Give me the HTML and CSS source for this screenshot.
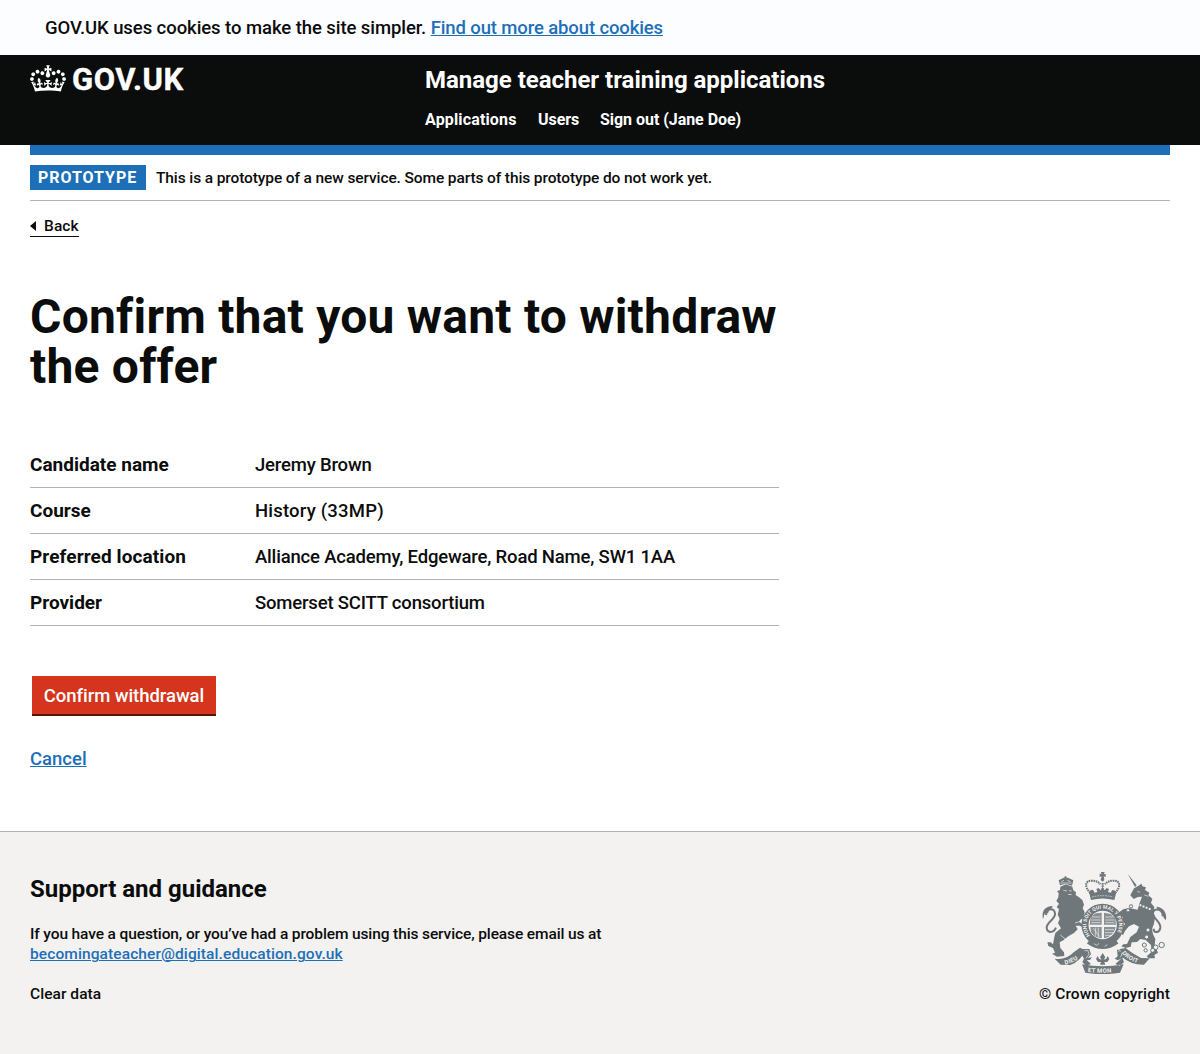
FILE: index.html
```html
<!DOCTYPE html>
<html lang="en">
<head>
<meta charset="utf-8">
<title>Confirm that you want to withdraw the offer - Manage teacher training applications</title>
<link rel="stylesheet" href="styles.css">
</head>
<body>
<div class="cookie-banner"><p class="cookie-text">GOV.UK uses cookies to make the site simpler. <a class="link cookie-link" href="#">Find out more about cookies</a></p></div>
<header class="header">
  <div class="header-container width">
    <a class="logo" href="#">
      <svg class="crown" viewBox="0 0 132 97" aria-hidden="true"><path fill="currentColor" fill-rule="evenodd" d="M25 30.2c3.5 1.5 7.7-.2 9.1-3.7 1.5-3.6-.2-7.8-3.9-9.2-3.6-1.4-7.6.3-9.1 3.9-1.4 3.5.3 7.5 3.9 9zM9 39.5c3.6 1.5 7.8-.2 9.2-3.7 1.5-3.6-.2-7.8-3.9-9.1-3.6-1.5-7.6.2-9.1 3.8-1.4 3.5.3 7.5 3.8 9zM4.4 57.2c3.5 1.5 7.7-.2 9.1-3.8 1.5-3.6-.2-7.7-3.9-9.1-3.5-1.5-7.6.3-9.1 3.8-1.4 3.5.3 7.6 3.9 9.1zm38.3-21.4c3.5 1.5 7.7-.2 9.1-3.8 1.5-3.6-.2-7.7-3.9-9.1-3.6-1.5-7.6.3-9.1 3.8-1.3 3.6.4 7.7 3.9 9.1zm64.4-5.6c-3.6 1.5-7.8-.2-9.1-3.7-1.5-3.6.2-7.8 3.8-9.2 3.6-1.4 7.7.3 9.2 3.9 1.3 3.5-.4 7.5-3.9 9zm15.9 9.3c-3.6 1.5-7.7-.2-9.1-3.7-1.5-3.6.2-7.8 3.7-9.1 3.6-1.5 7.7.2 9.2 3.8 1.5 3.5-.3 7.5-3.8 9zm4.7 17.7c-3.6 1.5-7.8-.2-9.2-3.8-1.5-3.6.2-7.7 3.9-9.1 3.6-1.5 7.7.3 9.2 3.8 1.3 3.5-.4 7.6-3.9 9.1zM89.3 35.8c-3.6 1.5-7.8-.2-9.2-3.8-1.4-3.6.2-7.7 3.9-9.1 3.6-1.5 7.7.3 9.2 3.8 1.4 3.6-.3 7.7-3.9 9.1zM69.7 17.7l8.9 4.7V9.3l-8.9 2.8c-.2-.3-.5-.6-.9-.9L72.4 0H59.6l3.5 11.2c-.3.3-.6.5-.9.9l-8.8-2.8v13.1l8.8-4.7c.3.3.6.7.9.9l-5 15.4v.1c-.2.8-.4 1.6-.4 2.4 0 4.1 3.1 7.5 7 8.1h.2c.3 0 .7.1 1 .1.4 0 .7 0 1-.1h.2c4-.6 7.1-4.1 7.1-8.1 0-.8-.1-1.7-.4-2.4V34l-5.1-15.4c.4-.2.7-.6 1-.9zM66 92.8c16.9 0 32.8 1.1 47.1 3.2 4-16.9 8.9-26.7 14-33.5l-9.6-3.4c1 4.9 1.1 7.2 0 10.2-1.5-1.4-3-4.3-4.2-8.7L108.6 76c2.8-2 5-3.2 7.5-3.3-4.4 9.4-10 11.9-13.6 11.2-4.3-.8-6.3-4.6-5.6-7.9 1-4.7 5.7-5.9 8-.5 4.3-8.7-3-11.4-7.6-8.8 7.1-7.2 7.9-13.5 2.1-21.1-8 6.1-8.1 12.3-4.5 20.8-4.7-5.4-12.1-2.5-9.5 6.2 3.4-5.2 7.9-2 7.2 3.1-.6 4.3-6.4 7.8-13.5 7.2-10.3-.9-10.9-8-11.2-13.8 2.5-.5 7.1 1.8 11 7.3L80.2 60c-4.1 4.4-8 5.3-12.3 5.4 1.4-4.4 8-11.6 8-11.6H55.5s6.4 7.2 7.9 11.6c-4.2-.1-8-1-12.3-5.4l1.4 16.4c3.9-5.5 8.5-7.7 10.9-7.3-.3 5.8-.9 12.8-11.1 13.8-7.2.6-12.9-2.9-13.5-7.2-.7-5 3.8-8.3 7.1-3.1 2.7-8.7-4.6-11.6-9.4-6.2 3.7-8.5 3.6-14.7-4.6-20.8-5.8 7.6-5 13.9 2.2 21.1-4.7-2.6-11.9.1-7.7 8.8 2.3-5.5 7.1-4.2 8.1.5.7 3.3-1.3 7.1-5.7 7.9-3.5.7-9-1.8-13.5-11.2 2.5.1 4.7 1.3 7.5 3.3l-4.7-15.4c-1.2 4.4-2.7 7.2-4.3 8.7-1.1-3-.9-5.3 0-10.2l-9.5 3.4c5 6.9 9.9 16.7 14 33.5 14.8-2.1 30.8-3.2 47.7-3.2z"/></svg>
      <span class="logo-text">GOV.UK</span>
    </a>
    <div class="header-content">
      <a class="service-name" href="#">Manage teacher training applications</a>
      <nav class="nav"><a class="nav-applications" href="#">Applications</a><a class="nav-users" href="#">Users</a><a href="#">Sign out (Jane Doe)</a></nav>
    </div>
  </div>
</header>
<div class="width">
  <div class="blue-bar"></div>
  <div class="phase-banner"><strong class="tag">PROTOTYPE</strong><span class="phase-text">This is a prototype of a new service. Some parts of this prototype do not work yet.</span></div>
  <a class="back-link" href="#">Back</a>
  <main class="main">
    <h1 class="heading">Confirm that you want to withdraw the offer</h1>
    <dl class="summary">
      <div class="row"><dt class="key">Candidate name</dt><dd class="value">Jeremy Brown</dd></div>
      <div class="row"><dt class="key">Course</dt><dd class="value value-course">History (33MP)</dd></div>
      <div class="row"><dt class="key key-location">Preferred location</dt><dd class="value">Alliance Academy, Edgeware, Road Name, SW1 1AA</dd></div>
      <div class="row"><dt class="key">Provider</dt><dd class="value">Somerset SCITT consortium</dd></div>
    </dl>
    <button class="button" type="button">Confirm withdrawal</button>
    <p class="cancel"><a class="link" href="#">Cancel</a></p>
  </main>
</div>
<footer class="footer">
  <div class="footer-container width">
    <div class="support">
      <h2 class="footer-heading">Support and guidance</h2>
      <p class="footer-text">If you have a question, or you’ve had a problem using this service, please email us at<br><a class="link email" href="#">becomingateacher@digital.education.gov.uk</a></p>
      <a class="clear-data" href="#">Clear data</a>
    </div>
    <a class="copyright" href="#">
      <svg class="crest" viewBox="36 21 375 306" aria-hidden="true">
        <defs>
          <path id="garter" d="M180 211A49 49 0 1 1 256 211"/>
          <path id="dieu" d="M106 299Q136 292 158 270"/>
          <path id="droit" d="M275 265Q300 291 338 298"/>
          <path id="etmon" d="M173 320Q218 327 268 319"/>
        </defs>
        <!-- lion -->
        <g fill="currentColor">
          <path d="M90 61L86 46 95 41 106 36 117 40 130 46 126 62 107 56zM104 34h5v6h-5z"/>
          <path d="M91 65L108 58 127 65 130 76 138 82 137 90 147 97 157 105 162 119 158 130 164 142 161 154 165 171 154 161 147 170 165 182 164 190 149 182 137 182 143 193 132 204 116 213 100 226 89 232 91 249 102 262 103 273 81 275 66 266 75 263 69 249 55 243 52 232 62 232 69 238 73 216 76 204 93 190 84 175 89 161 83 149 87 133 80 126 87 116 79 108 85 97 86 84 81 79 90 75z"/>
          <path d="M39 163C34 140 43 124 68 123C68 132 55 131 55 143L44 146z"/>
        </g>
        <path class="line tail" d="M48 150C50 128 73 127 75 145C78 162 49 171 50 188C51 204 70 206 78 188"/>
        <path class="gap" d="M94 50L102 46M112 46L121 50M100 76L111 78M117 77L125 78M114 88L125 89M91 54L125 54M135 174L158 167M91 210L107 223"/>
        <!-- unicorn -->
        <g fill="currentColor">
          <path d="M293 26L320 61 315 66zM301 91L312 70 323 64 335 56 337 64 348 67 345 75 358 83 355 91 367 101 363 114 373 126 370 143 375 156 372 176 366 192 369 208 376 222 374 240 384 263 373 270 375 280 356 280 350 274 365 260 363 240 347 225 331 222 321 231 305 232 302 245 287 249 274 244 280 238 291 237 301 216 320 202 327 185 312 177 297 184 285 198 279 211 272 203 279 187 285 177 278 169 279 157 269 151 267 142 281 132 300 130 323 134 328 116 336 95 324 96 311 102z"/>
          <path d="M407 166C413 146 401 126 379 125C383 137 399 136 397 148L402 160z"/>
        </g>
        <path class="line tail" d="M398 154C400 134 375 126 369 142C366 160 393 169 391 188C389 203 374 207 370 191"/>
        <path class="gap collar" d="M310 112L364 134"/>
        <path class="gap" d="M322 79L330 82M343 90L355 94M292 191L305 211"/>
        <g class="chain"><circle cx="294" cy="136" r="5"/><circle cx="303" cy="124" r="5"/><circle cx="354" cy="195" r="6"/><circle cx="350" cy="216" r="6"/><circle cx="343" cy="240" r="6"/><circle cx="377" cy="247" r="7"/><circle cx="395" cy="240" r="8"/><circle cx="368" cy="256" r="6"/><circle cx="347" cy="256" r="5"/></g>
        <!-- imperial crown -->
        <path class="line dots" d="M181 84C160 62 168 46 185 47Q203 47 211 58M255 84C276 62 268 46 251 47Q233 47 225 58M218 54V82"/>
        <path fill="currentColor" d="M215 28L212 21H224L221 28 227 26V36L221 34 223 45 218 50 212 45 215 34 209 36V26zM177 82C184 72 190 72 193 83L202 81 199 72 206 69 212 76 217 66 224 76 230 69 237 72 234 81 243 83C246 72 251 74 259 82L253 105Q218 96 183 105z"/>
        <path class="gap" d="M186 96Q218 88 250 96" stroke-dasharray="5 3"/>
        <!-- garter and shield -->
        <circle cx="218" cy="180" r="53" fill="none" stroke="currentColor" stroke-width="21"/>
        <text class="motto garter-motto"><textPath href="#garter">HONI SOIT QUI MAL Y PENSE</textPath></text>
        <path fill="currentColor" fill-opacity=".8" d="M182 155L197 145 215 143V179H179zM222 143L242 147 256 160 258 179H222zM181 186H215V220Q194 218 183 202zM222 186H257Q252 214 222 220z"/>
        <path class="gap" d="M186 156H211M184 165H211M184 173H211M226 156H250M226 165H253M226 173H253M190 190L208 214M197 188V212M205 188V216M225 194H252M225 203H250M225 211H244"/>
        <path class="ring" d="M176 228Q197 243 218 243Q239 243 260 228"/>
        <path class="gap" d="M192 236L200 241L207 235M224 244L232 239"/>
        <!-- ribbon -->
        <path fill="currentColor" d="M74 281Q106 287 132 261L150 248 165 256Q154 288 121 300L92 299zM151 252H178L183 268 174 279 186 277 180 285H164L157 272zM156 298Q218 310 281 298L270 323Q218 332 166 323zM270 252L287 249 306 263 333 279 359 280 342 299Q303 300 277 277zM261 254H285L278 278 264 286 254 281 263 274zM163 278L183 297 169 302 157 292zM277 278L256 297 269 302 282 292z"/>
        <path fill="currentColor" d="M218 264L226 277 221 284 229 281 233 273 238 282 232 291H223L226 299H210L213 291H204L198 282 203 273 207 281 215 284 210 277z"/>
        <path class="gap" d="M163 257H174L177 268 168 280M273 258H264M277 262L272 276"/>
        <text class="motto"><textPath href="#dieu">DIEU</textPath></text>
        <text class="motto"><textPath href="#etmon">ET MON</textPath></text>
        <text class="motto"><textPath href="#droit">DROIT</textPath></text>
      </svg>
      <span>© Crown copyright</span>
    </a>
  </div>
</footer>
</body>
</html>
```
FILE: styles.css
```css
* { box-sizing: border-box; }
body { margin: 0; background: #fff; color: #0b0c0c; font: 500 18.5px/25px Roboto, "Liberation Sans", sans-serif; letter-spacing: -.18px; }
a { color: inherit; text-decoration: none; }
h1, h2, p, dl, dd { margin: 0; }
.width { width: 1140px; margin: 0 auto; }
.link { color: #1d70b8; text-decoration: underline; text-decoration-thickness: 1px; text-underline-offset: 1px; }
.cookie-banner { height: 55px; padding: 16px 45px 14px; background: #fcfdff; }
.cookie-text { letter-spacing: -.07px; }
.cookie-link { letter-spacing: -.12px; }
.header { height: 90px; background: #0b0c0c; color: #fff; }
.header-container { display: flex; padding-top: 10px; }
.logo { display: flex; width: 395px; gap: 6px; height: 30px; }
.crown { width: 36px; height: 27px; }
.logo-text { font-size: 31px; font-weight: 700; line-height: 30px; letter-spacing: .6px; -webkit-text-stroke: .4px #fff; }
.header-content { display: flex; flex-direction: column; font-weight: 700; }
.service-name { font-size: 24px; line-height: 30px; letter-spacing: -.02px; }
.nav { display: flex; margin-top: 15px; font-size: 16px; line-height: 20px; letter-spacing: -.04px; }
.nav-applications { width: 113px; letter-spacing: .15px; }
.nav-users { width: 62px; }
.blue-bar { height: 10px; background: #1d70b8; }
.phase-banner { display: flex; align-items: center; gap: 10px; height: 46px; border-bottom: 1px solid #b1b4b6; font-size: 15.5px; letter-spacing: -.11px; }
.phase-text { padding-top: 2px; }
.tag { width: 116px; height: 25px; padding-left: 8px; background: #1d70b8; color: #fff; font-size: 16px; font-weight: 700; letter-spacing: .95px; }
.back-link { display: flex; width: 49px; height: 21px; margin-top: 15px; align-items: center; gap: 8px; border-bottom: 1px solid #0b0c0c; font-size: 15.5px; line-height: 20px; letter-spacing: .1px; }
.back-link::before { content: ""; border: solid transparent; border-width: 5px 6px 5px 0; border-right-color: #0b0c0c; }
.main { width: 749px; padding: 55px 0 59px; }
.heading { font-size: 48px; line-height: 50px; font-weight: 700; letter-spacing: .22px; }
.summary { margin: 50px 0; }
.row { display: flex; height: 46px; padding: 10px 0; border-bottom: 1px solid #b1b4b6; }
.key { width: 225px; font-size: 19px; font-weight: 700; letter-spacing: 0; }
.key-location { letter-spacing: .1px; }
.value { padding-top: 1px; }
.value-course { letter-spacing: .2px; }
.button { display: block; width: 184px; height: 38px; margin-left: 2px; padding: 2px 0 0; border: 0; background: #d4351c; box-shadow: 0 2px 0 #55150b; color: #fff; font: inherit; letter-spacing: -.05px; }
.cancel { margin-top: 33px; letter-spacing: 0; }
.footer { height: 223px; background: #f3f2f1; border-top: 1px solid #b1b4b6; font-size: 15.5px; line-height: 20px; letter-spacing: -.12px; }
.footer-container { display: flex; justify-content: space-between; padding-top: 40px; }
.footer-heading { padding-top: 2px; font-size: 24px; line-height: 30px; font-weight: 700; letter-spacing: 0; }
.footer-text { margin: 20px 0; }
.email { letter-spacing: .1px; }
.clear-data { letter-spacing: .05px; }
.copyright { display: flex; width: 131px; flex-direction: column; align-items: flex-end; letter-spacing: .1px; white-space: nowrap; }
.crest { width: 125px; height: 102px; margin: 0 3px 10px 0; color: #6f777b; }
.line { fill: none; stroke: currentColor; stroke-width: 4; }
.tail { stroke-width: 6; }
.dots { stroke-width: 6; stroke-dasharray: 5 2; }
.gap { fill: none; stroke: #f3f2f1; stroke-width: 2; }
.collar { stroke-width: 6; stroke-dasharray: 6 4; }
.ring { fill: none; stroke: currentColor; stroke-width: 18; }
.chain { fill: #f3f2f1; stroke: currentColor; stroke-width: 3; }
.motto { fill: #f3f2f1; font: 700 18px Roboto, sans-serif; letter-spacing: 1px; }
.garter-motto { font-size: 15px; letter-spacing: .4px; }
```
